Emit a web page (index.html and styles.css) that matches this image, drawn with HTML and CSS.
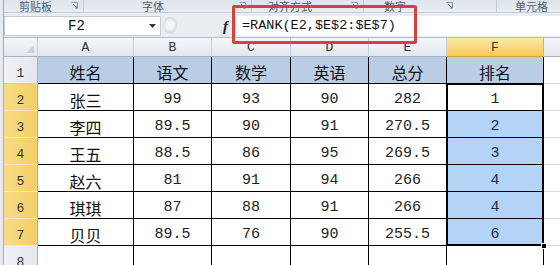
FILE: index.html
```html
<!DOCTYPE html>
<html lang="zh">
<head>
<meta charset="utf-8">
<link rel="stylesheet" href="styles.css">
</head>
<body>
<div class="app">
  <div class="ribbon">
    <div class="grp g1"><span class="lbl">剪贴板</span><span class="launch"><svg width="7" height="7" viewBox="0 0 7 7"><path d="M0.5 0.5h6v6" fill="none" stroke="#8a96a6"/><path d="M2 2l4 4M4 6h2V4" fill="none" stroke="#6d7a8b"/></svg></span></div>
    <div class="grp g2"><span class="lbl">字体</span><span class="launch"><svg width="7" height="7" viewBox="0 0 7 7"><path d="M0.5 0.5h6v6" fill="none" stroke="#8a96a6"/><path d="M2 2l4 4M4 6h2V4" fill="none" stroke="#6d7a8b"/></svg></span></div>
    <div class="grp g3"><span class="lbl">对齐方式</span><span class="launch"><svg width="7" height="7" viewBox="0 0 7 7"><path d="M0.5 0.5h6v6" fill="none" stroke="#8a96a6"/><path d="M2 2l4 4M4 6h2V4" fill="none" stroke="#6d7a8b"/></svg></span></div>
    <div class="grp g4"><span class="lbl">数字</span><span class="launch"><svg width="7" height="7" viewBox="0 0 7 7"><path d="M0.5 0.5h6v6" fill="none" stroke="#8a96a6"/><path d="M2 2l4 4M4 6h2V4" fill="none" stroke="#6d7a8b"/></svg></span></div>
    <div class="grp g5"><span class="lbl">单元格</span></div>
  </div>
  <div class="fbar">
    <div class="namebox"><span class="name">F2</span><span class="dd"><svg width="7" height="4" viewBox="0 0 7 4"><path d="M0 0h7L3.5 4z" fill="#333"/></svg></span></div>
    <div class="knob"></div>
    <div class="fx">f</div>
    <div class="finput">=RANK(E2,$E$2:$E$7)</div>
  </div>
  <div class="sheet">
    <div class="corner"><svg width="8" height="8" viewBox="0 0 8 8"><path d="M8 0V8H0z" fill="#c9d0da"/></svg></div>
    <div class="ch">A</div><div class="ch">B</div><div class="ch">C</div><div class="ch">D</div><div class="ch">E</div><div class="ch chs">F</div><div class="ch chg"></div>

    <div class="rh">1</div>
    <div class="c hd">姓名</div><div class="c hd">语文</div><div class="c hd">数学</div><div class="c hd">英语</div><div class="c hd">总分</div><div class="c hd">排名</div><div class="g"></div>

    <div class="rh rs">2</div>
    <div class="c">张三</div><div class="c n">99</div><div class="c n">93</div><div class="c n">90</div><div class="c n">282</div><div class="c n act">1</div><div class="g"></div>

    <div class="rh rs">3</div>
    <div class="c">李四</div><div class="c n">89.5</div><div class="c n">90</div><div class="c n">91</div><div class="c n">270.5</div><div class="c n sel">2</div><div class="g"></div>

    <div class="rh rs">4</div>
    <div class="c">王五</div><div class="c n">88.5</div><div class="c n">86</div><div class="c n">95</div><div class="c n">269.5</div><div class="c n sel">3</div><div class="g"></div>

    <div class="rh rs">5</div>
    <div class="c">赵六</div><div class="c n">81</div><div class="c n">91</div><div class="c n">94</div><div class="c n">266</div><div class="c n sel">4</div><div class="g"></div>

    <div class="rh rs">6</div>
    <div class="c">琪琪</div><div class="c n">87</div><div class="c n">88</div><div class="c n">91</div><div class="c n">266</div><div class="c n sel">4</div><div class="g"></div>

    <div class="rh rs">7</div>
    <div class="c">贝贝</div><div class="c n">89.5</div><div class="c n">76</div><div class="c n">90</div><div class="c n">255.5</div><div class="c n sel last">6<span class="handle"></span></div><div class="g"></div>

    <div class="rh">8</div>
    <div class="e"></div><div class="e"></div><div class="e"></div><div class="e"></div><div class="e"></div><div class="e"></div><div class="g gl"></div>
  </div>
  <div class="callout"></div>
</div>
</body>
</html>
```
FILE: styles.css
```css
* { box-sizing: border-box; }
html, body { margin: 0; padding: 0; }
body {
  width: 560px;
  height: 265px;
  overflow: hidden;
  background: #e6ebf1;
  font-family: "Noto Sans CJK SC", sans-serif;
}
.app {
  position: relative;
  margin-left: 3px;
  border-left: 1px solid #a3adba;
  height: 265px;
  overflow: hidden;
}
.ribbon {
  display: flex;
  height: 13px;
  background: linear-gradient(#dfe5ec, #e9edf2);
  border-bottom: 1px solid #c2cbd6;
  overflow: hidden;
}
.grp {
  display: flex;
  align-items: flex-start;
  border-right: 1px solid #c4ccd6;
  height: 12px;
}
.lbl {
  font-size: 11px;
  line-height: 12px;
  color: #4f5d6e;
  white-space: nowrap;
}
.launch { margin-left: auto; margin-right: 5px; margin-top: 2px; display: flex; }
.g1 { width: 80px; } .g1 .lbl { margin-left: 15px; }
.g2 { width: 168px; } .g2 .lbl { margin-left: 58px; }
.g3 { width: 112px; } .g3 .lbl { margin-left: 16px; }
.g4 { width: 133px; } .g4 .lbl { margin-left: 20px; } .g4 .launch { margin-left: 40px; margin-right: auto; }
.g5 { border-right: none; } .g5 .lbl { margin-left: 18px; }

.fbar {
  display: flex;
  height: 25px;
  padding: 3px 0 1px;
  background: #e8edf2;
  border-bottom: 1px solid #b3bdc9;
}
.namebox {
  width: 157px;
  background: #fff;
  border: 1px solid #c3cbd5;
  display: flex;
  align-items: center;
}
.name {
  flex: 1;
  text-align: center;
  font-family: "Liberation Mono", monospace;
  font-size: 14px;
  color: #111;
  padding-left: 4px;
}
.dd { width: 16px; display: flex; justify-content: center; }
.knob {
  width: 14px;
  height: 18px;
  margin-left: 2px;
  border-radius: 50%;
  background: radial-gradient(circle at 50% 50%, #f4f6f8 30%, #d2d8df 70%, #e8edf2 72%);
}
.fx {
  margin-left: 46px;
  width: 11px;
  font-family: "Liberation Serif", serif;
  font-style: italic;
  font-weight: bold;
  font-size: 15px;
  line-height: 20px;
  color: #222;
}
.finput {
  flex: 1;
  margin-left: 1px;
  background: #fff;
  border-left: 1px solid #c3cbd5;
  font-family: "Liberation Mono", monospace;
  font-size: 13.5px;
  line-height: 20px;
  padding-left: 6px;
  color: #111;
  white-space: nowrap;
}
.callout {
  position: absolute;
  left: 228px;
  top: 5px;
  width: 185px;
  height: 39px;
  border: 3px solid #d8403a;
  border-radius: 2px;
}

.sheet {
  display: grid;
  grid-template-columns: 34px 96px 78px 79px 78px 78px 97px 1fr;
  grid-template-rows: 19px repeat(8, 27px);
  height: 235px;
  background: #fff;
}
.corner {
  background: linear-gradient(#f3f5f8, #e3e8ee);
  border-right: 1px solid #c6ced8;
  border-bottom: 1px solid #9fb3c9;
  display: flex;
  align-items: flex-end;
  justify-content: flex-end;
  padding: 0 3px 3px 0;
}
.ch {
  background: linear-gradient(#f5f7fa, #e2e7ed);
  border-right: 1px solid #c6ced8;
  border-bottom: 1px solid #9fb3c9;
  font-family: "Liberation Mono", monospace;
  font-size: 13px;
  color: #333;
  display: flex;
  align-items: center;
  justify-content: center;
}
.chs {
  background: linear-gradient(#fbe8aa, #f5c955);
  border-right-color: #d9b55a;
  border-bottom-color: #d2a43e;
}
.chg { border-right: none; }
.rh {
  background: linear-gradient(90deg, #eef1f5, #e3e8ee);
  border-right: 1px solid #9fb3c9;
  border-bottom: 1px solid #c6ced8;
  font-family: "Liberation Mono", monospace;
  font-size: 13px;
  color: #333;
  display: flex;
  align-items: flex-end;
  justify-content: center;
  padding-bottom: 2px;
}
.rs {
  background: linear-gradient(90deg, #f9dc86, #f5cf67);
  border-right-color: #d8a947;
  border-bottom-color: #f8e6b4;
}
.c {
  border-right: 1px solid #000;
  border-bottom: 1px solid #000;
  display: flex;
  align-items: center;
  justify-content: center;
  padding-top: 5px;
  font-size: 16px;
  color: #111;
  line-height: 1;
}
.hd { background: #b9cde5; padding-top: 3px; }
.n {
  font-family: "Liberation Mono", monospace;
  font-size: 15px;
  color: #222;
}
.sel {
  background: #b3d4f6;
  color: #1f2a3a;
  box-shadow: inset 1px 0 0 #000, inset -1px 0 0 #000;
}
.act {
  background: #fff;
  box-shadow: inset 1px 1px 0 #000, inset -1px 0 0 #000;
}
.last {
  position: relative;
  box-shadow: inset 1px 0 0 #000, inset -1px 0 0 #000, inset 0 -1px 0 #000;
}
.g { border-bottom: 1px solid #dadcdf; }
.gl { border-bottom: none; }
.e { border-right: 1px solid #000; }
.handle {
  position: absolute;
  right: -4px;
  bottom: -4px;
  width: 6px;
  height: 6px;
  background: #000;
  border: 1px solid #fff;
}
```
